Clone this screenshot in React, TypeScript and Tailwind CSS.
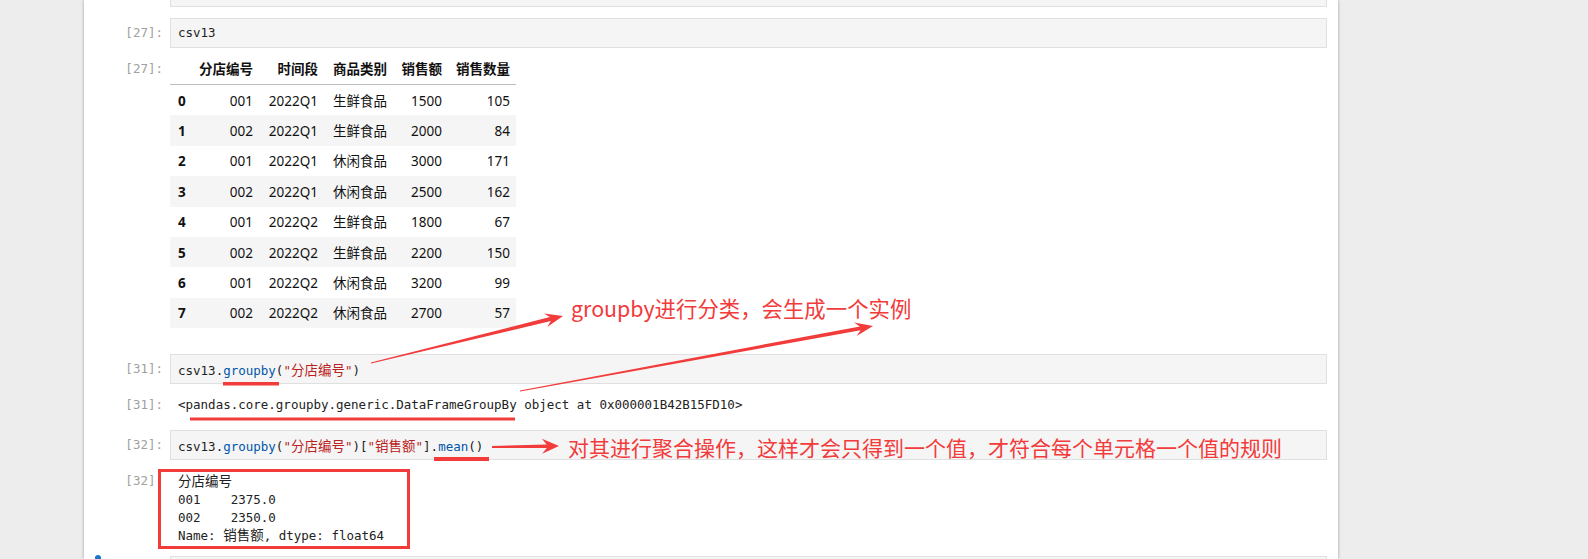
import React from "react";

const MONO = "font-['DejaVu_Sans_Mono','Noto_Sans_CJK_SC',monospace]";
const SANS = "font-['Noto_Sans','Noto_Sans_CJK_SC',sans-serif]";
const RED = "#f23b3b";

function Z({ children }: { children: React.ReactNode }) {
  return <span className="font-['Noto_Sans_CJK_SC',sans-serif] text-[13.5px]">{children}</span>;
}

function Prompt({ label, h }: { label: string; h: string }) {
  return (
    <div className={`w-[86px] shrink-0 pr-[7px] text-right text-[12.5px] text-[#a0a0a0] ${MONO} ${h}`}>{label}</div>
  );
}

function InputBox({ children }: { children?: React.ReactNode }) {
  return (
    <div className={`h-[30px] flex-1 border border-[#e0e0e0] bg-[#f5f5f5] px-[7px] text-[12.5px] leading-[28px] text-[#222] ${MONO}`}>
      {children}
    </div>
  );
}

const rows = [
  ["0", "001", "2022Q1", "生鲜食品", "1500", "105"],
  ["1", "002", "2022Q1", "生鲜食品", "2000", "84"],
  ["2", "001", "2022Q1", "休闲食品", "3000", "171"],
  ["3", "002", "2022Q1", "休闲食品", "2500", "162"],
  ["4", "001", "2022Q2", "生鲜食品", "1800", "67"],
  ["5", "002", "2022Q2", "生鲜食品", "2200", "150"],
  ["6", "001", "2022Q2", "休闲食品", "3200", "99"],
  ["7", "002", "2022Q2", "休闲食品", "2700", "57"],
];

const cols = "grid grid-cols-[22px_68px_65px_69px_55px_67px]";

function Table() {
  return (
    <div className={`w-[346px] text-[13.5px] text-[#111] ${SANS}`}>
      <div className={`${cols} h-[31px] items-center border-b border-[#bdbdbd] font-bold`}>
        <div />
        <div className="pr-[7px] text-right">分店编号</div>
        <div className="pr-[7px] text-right">时间段</div>
        <div className="pr-[7px] text-right">商品类别</div>
        <div className="pr-[7px] text-right">销售额</div>
        <div className="pr-[6px] text-right">销售数量</div>
      </div>
      {rows.map((r, i) => (
        <div key={i} className={`${cols} h-[30.4px] items-center pt-[1px] ${i % 2 === 1 ? "bg-[#f5f5f5]" : "bg-white"}`}>
          <div className="pl-[8px] font-bold">{r[0]}</div>
          <div className="pr-[7px] text-right">{r[1]}</div>
          <div className="pr-[7px] text-right">{r[2]}</div>
          <div className="pr-[7px] text-right">{r[3]}</div>
          <div className="pr-[7px] text-right">{r[4]}</div>
          <div className="pr-[6px] text-right">{r[5]}</div>
        </div>
      ))}
    </div>
  );
}

function arrowPoints(sx: number, sy: number, tx: number, ty: number, L = 18, W = 7, w0 = 1, w1 = 4) {
  const dx = tx - sx;
  const dy = ty - sy;
  const len = Math.hypot(dx, dy);
  const ux = dx / len;
  const uy = dy / len;
  const nx = -uy;
  const ny = ux;
  const bx = tx - ux * L * 0.72;
  const by = ty - uy * L * 0.72;
  const hx = tx - ux * L;
  const hy = ty - uy * L;
  const pts = [
    [sx + (nx * w0) / 2, sy + (ny * w0) / 2],
    [bx + (nx * w1) / 2, by + (ny * w1) / 2],
    [hx + nx * W, hy + ny * W],
    [tx, ty],
    [hx - nx * W, hy - ny * W],
    [bx - (nx * w1) / 2, by - (ny * w1) / 2],
    [sx - (nx * w0) / 2, sy - (ny * w0) / 2],
  ];
  return pts.map((p) => `${p[0].toFixed(1)},${p[1].toFixed(1)}`).join(" ");
}

function Overlay() {
  return (
    <>
      <svg className="pointer-events-none absolute left-0 top-0" width={1588} height={559} viewBox="0 0 1588 559">
        <polygon points={arrowPoints(371, 363, 563, 316)} fill={RED} />
        <polygon points={arrowPoints(520, 391, 873, 326)} fill={RED} />
        <polygon points={arrowPoints(492, 447, 559, 446, 17, 7.5, 2, 3.5)} fill={RED} />
        <rect x={223} y={382} width={56} height={3.5} fill={RED} />
        <rect x={190} y={417.5} width={325} height={3} fill={RED} />
        <rect x={434} y={457} width={55} height={4} fill={RED} />
      </svg>
      <div className="pointer-events-none absolute left-[158px] top-[469px] h-[80px] w-[252px] border-[3px] border-[#f23b3b]" />
      <div className="pointer-events-none absolute left-[571px] top-[293px] whitespace-nowrap font-['Noto_Sans_CJK_SC',sans-serif] text-[21.4px] leading-[30px] text-[#f23b3b]">
        groupby进行分类，会生成一个实例
      </div>
      <div className="pointer-events-none absolute left-[568px] top-[432px] whitespace-nowrap font-['Noto_Sans_CJK_SC',sans-serif] text-[21px] leading-[30px] text-[#f23b3b]">
        对其进行聚合操作，这样才会只得到一个值，才符合每个单元格一个值的规则
      </div>
    </>
  );
}

export default function App() {
  const P = "text-[#0055aa]";
  const S = "text-[#ba2121]";
  return (
    <div className="relative h-[559px] w-[1588px] overflow-hidden bg-[#ededed]">
      <div className="ml-[84px] h-full w-[1254px] bg-white pr-[11px] shadow-[0_0_3px_rgba(0,0,0,0.35)]">
        {/* cut-off cell */}
        <div className="flex">
          <div className="w-[86px] shrink-0" />
          <div className="h-[7px] flex-1 border-x border-b border-[#e0e0e0] bg-[#f5f5f5]" />
        </div>

        {/* [27] input */}
        <div className="mt-[11px] flex">
          <Prompt label="[27]:" h="leading-[30px]" />
          <InputBox>csv13</InputBox>
        </div>

        {/* [27] output */}
        <div className="mt-[6px] flex">
          <Prompt label="[27]:" h="leading-[30px]" />
          <Table />
        </div>

        {/* [31] input */}
        <div className="mt-[26px] flex">
          <Prompt label="[31]:" h="leading-[30px]" />
          <InputBox>
            csv13.<span className={P}>groupby</span>(<span className={S}>"<Z>分店编号</Z>"</span>)
          </InputBox>
        </div>

        {/* [31] output */}
        <div className="mt-[12px] flex">
          <Prompt label="[31]:" h="leading-[18px]" />
          <div className={`pl-[8px] text-[12.5px] leading-[18px] text-[#222] ${MONO}`}>
            &lt;pandas.core.groupby.generic.DataFrameGroupBy object at 0x000001B42B15FD10&gt;
          </div>
        </div>

        {/* [32] input */}
        <div className="mt-[16px] flex">
          <Prompt label="[32]:" h="leading-[30px]" />
          <InputBox>
            csv13.<span className={P}>groupby</span>(<span className={S}>"<Z>分店编号</Z>"</span>)[<span className={S}>"<Z>销售额</Z>"</span>].<span className={P}>mean</span>()
          </InputBox>
        </div>

        {/* [32] output */}
        <div className="mt-[12px] flex">
          <Prompt label="[32]:" h="leading-[17.7px]" />
          <div className={`whitespace-pre pl-[8px] text-[12.5px] leading-[17.7px] text-[#222] ${MONO}`}>
            <div><Z>分店编号</Z></div>
            <div>001    2375.0</div>
            <div>002    2350.0</div>
            <div>Name: <Z>销售额</Z>, dtype: float64</div>
          </div>
        </div>

        {/* next cell */}
        <div className="relative mt-[11px] flex">
          <div className="absolute left-[11px] top-[-1px] h-[40px] w-[6px] rounded-t-[3px] bg-[#1976d2]" />
          <div className="w-[86px] shrink-0" />
          <div className="h-[30px] flex-1 border border-[#e0e0e0] bg-[#f5f5f5]" />
        </div>
      </div>
      <Overlay />
    </div>
  );
}
